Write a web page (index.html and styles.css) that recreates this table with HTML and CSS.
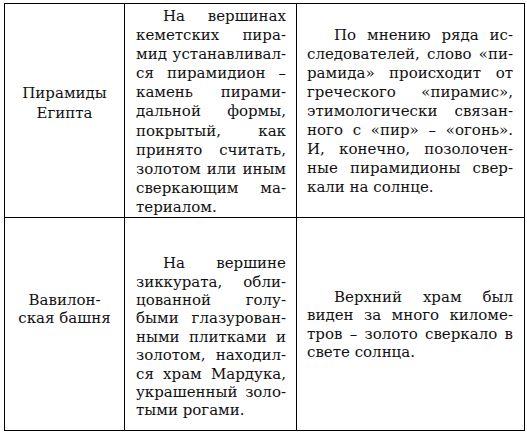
FILE: index.html
```html
<!DOCTYPE html>
<html lang="ru">
<head>
<meta charset="utf-8">
<title>Пирамиды</title>
<link rel="stylesheet" href="styles.css">
</head>
<body>
<table class="grid">
  <colgroup>
    <col class="c-name">
    <col class="c-mid">
    <col class="c-right">
  </colgroup>
  <tr class="row row-a">
    <td class="name name-a"><span class="l">Пирамиды</span><span class="l">Египта</span></td>
    <td class="text mid mid-a">
      <span class="l j first">На вершинах</span>
      <span class="l j">кеметских пира-</span>
      <span class="l j">мид устанавливал-</span>
      <span class="l j">ся пирамидион –</span>
      <span class="l j">камень пирами-</span>
      <span class="l j">дальной формы,</span>
      <span class="l j">покрытый, как</span>
      <span class="l j">принято считать,</span>
      <span class="l j">золотом или иным</span>
      <span class="l j">сверкающим ма-</span>
      <span class="l">териалом.</span>
    </td>
    <td class="text right right-a">
      <span class="l j first">По мнению ряда ис-</span>
      <span class="l j">следователей, слово «пи-</span>
      <span class="l j">рамида» происходит от</span>
      <span class="l j">греческого «пирамис»,</span>
      <span class="l j">этимологически связан-</span>
      <span class="l j">ного с «пир» – «огонь».</span>
      <span class="l j">И, конечно, позолочен-</span>
      <span class="l j">ные пирамидионы свер-</span>
      <span class="l">кали на солнце.</span>
    </td>
  </tr>
  <tr class="row row-b">
    <td class="name name-b"><span class="l">Вавилон-</span><span class="l">ская башня</span></td>
    <td class="text mid mid-b">
      <span class="l j first">На вершине</span>
      <span class="l j">зиккурата, обли-</span>
      <span class="l j">цованной голу-</span>
      <span class="l j">быми глазурован-</span>
      <span class="l j">ными плитками и</span>
      <span class="l j">золотом, находил-</span>
      <span class="l j">ся храм Мардука,</span>
      <span class="l j">украшенный золо-</span>
      <span class="l">тыми рогами.</span>
    </td>
    <td class="text right right-b">
      <span class="l j first">Верхний храм был</span>
      <span class="l j">виден за много киломе-</span>
      <span class="l j">тров – золото сверкало в</span>
      <span class="l">свете солнца.</span>
    </td>
  </tr>
</table>
</body>
</html>
```

FILE: styles.css
```css
html, body {
  margin: 0;
  padding: 0;
  background: #fff;
}

body {
  padding: 3px 0 0 4px;
  font-family: "DejaVu Serif", "Liberation Serif", serif;
  font-size: 15px;
  color: #111;
}

.grid {
  border-collapse: collapse;
  table-layout: fixed;
  width: 520px;
}

.c-name { width: 120px; }
.c-mid { width: 172px; }
.c-right { width: 228px; }

.grid td {
  border: 1px solid #000;
  padding: 0;
  vertical-align: middle;
  font-family: "DejaVu Serif", "Liberation Serif", serif;
  font-size: 15px;
}

.row-a { height: 214px; }
.row-b { height: 213px; }

.row-a td { line-height: 19.1px; }
.row-b td { line-height: 18.4px; }

.l {
  display: block;
  white-space: nowrap;
}

.j {
  text-align: justify;
  text-align-last: justify;
}

.first {
  padding-left: 27px;
}

.name {
  text-align: center;
}

.grid td.mid {
  padding-left: 11px;
  padding-right: 10px;
}

.grid td.right {
  padding-left: 10px;
  padding-right: 11px;
}

.grid td.mid-a { padding-top: 3px; }
.grid td.mid-b { padding-top: 26px; }
.grid td.right-a { padding-top: 2px; }
.grid td.right-b { padding-top: 1px; }
.grid td.name-a { padding-bottom: 14px; }
.grid td.name-b { padding-bottom: 30px; }
```
